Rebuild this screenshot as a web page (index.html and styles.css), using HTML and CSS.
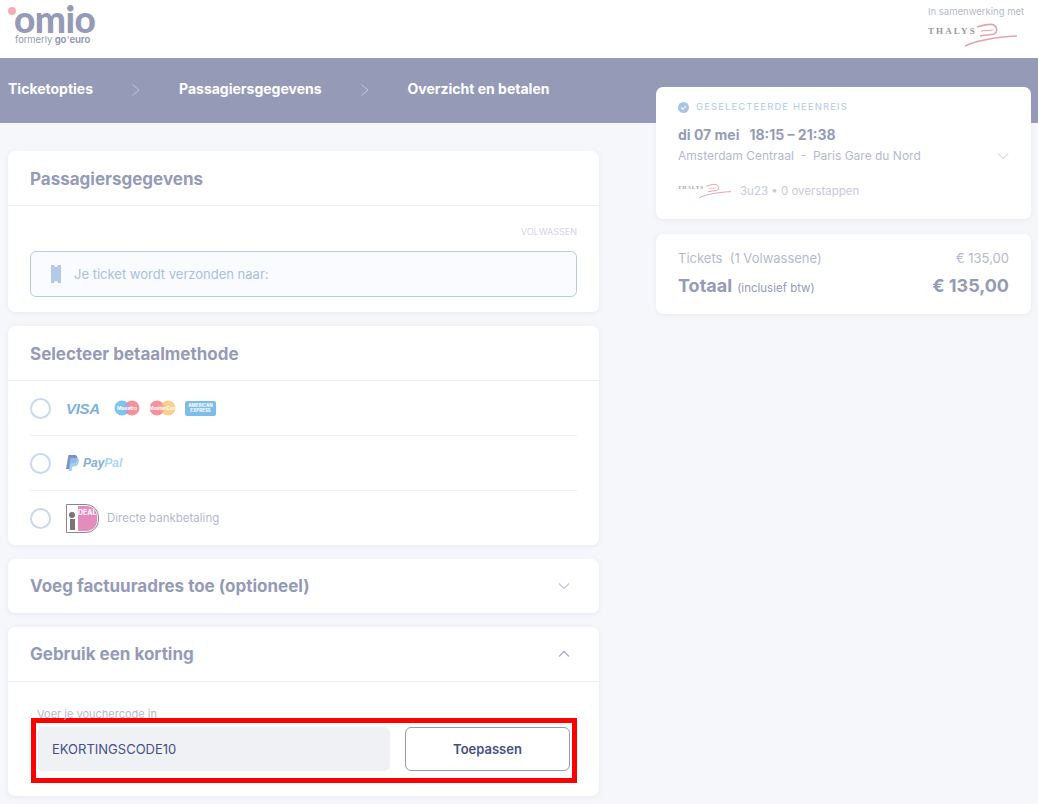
FILE: index.html
```html
<!DOCTYPE html>
<html lang="nl">
<head>
    <meta charset="UTF-8">
    <title>Omio - Overzicht en betalen</title>
    <link rel="stylesheet" href="styles.css">
</head>
<body>
    <svg class="defs" width="0" height="0">
        <symbol id="thalys-mark" viewBox="0 0 54 26">
            <path d="M1 24 C14 18 34 15 53 14" fill="none" stroke="#e3a3b0" stroke-width="1.6"/>
            <path d="M13 5 C20 3 26 1 30 3 C34 6 33 11 30 12 C26 13 20 13 16 14" fill="none" stroke="#e3a3b0" stroke-width="1.6"/>
            <path d="M17 9 L29 8" fill="none" stroke="#e3a3b0" stroke-width="1"/>
        </symbol>
    </svg>

    <header class="topbar">
        <div class="logo">
            <span class="logo-dot"></span>
            <div class="logo-word">omio</div>
            <div class="logo-sub">formerly <b>go<i>'</i>euro</b></div>
        </div>
        <div class="partner">
            <div class="partner-label">In samenwerking met</div>
            <div class="partner-logo">
                <span class="thalys-word">THALYS</span>
                <svg class="thalys-mark"><use href="#thalys-mark"/></svg>
            </div>
        </div>
    </header>

    <nav class="steps">
        <span>Ticketopties</span>
        <svg class="step-arrow" viewBox="0 0 10 14"><path d="M1.5 1.5 L8 7 L1.5 12.5" fill="none" stroke="#c3c7d9" stroke-width="1"/></svg>
        <span>Passagiersgegevens</span>
        <svg class="step-arrow" viewBox="0 0 10 14"><path d="M1.5 1.5 L8 7 L1.5 12.5" fill="none" stroke="#c3c7d9" stroke-width="1"/></svg>
        <span>Overzicht en betalen</span>
    </nav>

    <main class="layout">
        <section class="left-col">
            <div class="card">
                <h2 class="card-title">Passagiersgegevens</h2>
                <div class="passenger-body">
                    <div class="passenger-type">VOLWASSEN</div>
                    <div class="ticket-note">
                        <svg class="ticket-icon" viewBox="0 0 10 18"><path d="M0 0 H3 A2 2 0 0 0 7 0 H10 V18 H7 A2 2 0 0 0 3 18 H0 Z" fill="#b3c9e8"/></svg>
                        <span>Je ticket wordt verzonden naar:</span>
                    </div>
                </div>
            </div>

            <div class="card">
                <h2 class="card-title">Selecteer betaalmethode</h2>
                <div class="pay-list">
                    <div class="pay-row">
                        <span class="radio"></span>
                        <span class="visa">VISA</span>
                        <span class="cc-logo">
                            <svg width="26" height="16" viewBox="0 0 26 16"><circle cx="8" cy="8" r="7.5" fill="#7fc4ec"/><circle cx="18" cy="8" r="7.5" fill="#f5929c"/><path d="M13 2.2 A7.5 7.5 0 0 1 13 13.8 A7.5 7.5 0 0 1 13 2.2" fill="#a5a8d8"/></svg>
                            <span class="cc-text">Maestro</span>
                        </span>
                        <span class="cc-logo">
                            <svg width="27" height="16" viewBox="0 0 27 16"><circle cx="8" cy="8" r="7.5" fill="#f5929c"/><circle cx="19" cy="8" r="7.5" fill="#fbcf8d"/><path d="M13.5 3 A7.5 7.5 0 0 1 13.5 13 A7.5 7.5 0 0 1 13.5 3" fill="#f8ab8c"/></svg>
                            <span class="cc-text">MasterCard</span>
                        </span>
                        <span class="amex">AMERICAN<br>EXPRESS</span>
                    </div>
                    <div class="pay-row">
                        <span class="radio"></span>
                        <svg class="paypal-icon" width="13" height="16" viewBox="0 0 13 16"><path d="M2.5 0 H8 C11 0 12 2 11.3 4.5 C10.6 7.5 8.5 8.5 6 8.5 H4.5 L3.5 14 H0 Z" fill="#7f8fc9"/><path d="M4.5 3 H10 C13 3 13.4 5 12.7 7.5 C12 10.5 10 11.5 7.5 11.5 H6.5 L5.7 16 H2.5 Z" fill="#8fc6ee" opacity=".8"/></svg>
                        <span class="paypal"><b>Pay</b><i>Pal</i></span>
                    </div>
                    <div class="pay-row">
                        <span class="radio"></span>
                        <span class="ideal">
                            <span class="ideal-left"><span class="ideal-dot"></span><span class="ideal-bar"></span></span>
                            <span class="ideal-pink">DEAL</span>
                        </span>
                        <span class="pay-label">Directe bankbetaling</span>
                    </div>
                </div>
            </div>

            <div class="card">
                <div class="card-head">
                    <h2 class="card-title plain">Voeg factuuradres toe (optioneel)</h2>
                    <svg class="chevron" viewBox="0 0 12 8"><path d="M1 1.5 L6 6.5 L11 1.5" fill="none" stroke="#c3c7d9" stroke-width="1.3"/></svg>
                </div>
            </div>

            <div class="card">
                <div class="card-head bordered">
                    <h2 class="card-title plain">Gebruik een korting</h2>
                    <svg class="chevron" viewBox="0 0 12 8"><path d="M1 6.5 L6 1.5 L11 6.5" fill="none" stroke="#a9aec8" stroke-width="1.3"/></svg>
                </div>
                <div class="voucher-body">
                    <div class="voucher-label">Voer je vouchercode in</div>
                    <div class="voucher-row">
                        <div class="voucher-input">EKORTINGSCODE10</div>
                        <button class="voucher-btn">Toepassen</button>
                    </div>
                </div>
            </div>
        </section>

        <aside class="right-col">
            <div class="card side-card trip">
                <div class="trip-head">
                    <svg class="check" viewBox="0 0 12 12"><circle cx="6" cy="6" r="6" fill="#a9c4e8"/><path d="M3.5 6.2 L5.3 8 L8.6 4.4" fill="none" stroke="#fff" stroke-width="1.1"/></svg>
                    <span>GESELECTEERDE HEENREIS</span>
                </div>
                <div class="trip-time">di 07 mei&nbsp;&nbsp; 18:15 – 21:38</div>
                <div class="trip-route">
                    <span>Amsterdam Centraal &nbsp;-&nbsp; Paris Gare du Nord</span>
                    <svg class="chevron" viewBox="0 0 12 8"><path d="M1 1.5 L6 6.5 L11 1.5" fill="none" stroke="#c3c7d9" stroke-width="1"/></svg>
                </div>
                <div class="trip-train">
                    <span class="thalys-small">THALYS</span>
                    <svg class="thalys-mark-small"><use href="#thalys-mark"/></svg>
                    <span>3u23 • 0 overstappen</span>
                </div>
            </div>

            <div class="card side-card totals">
                <div class="total-row">
                    <span>Tickets &nbsp;(1 Volwassene)</span>
                    <span>€ 135,00</span>
                </div>
                <div class="total-row grand">
                    <span><b>Totaal</b> <small>(inclusief btw)</small></span>
                    <b>€ 135,00</b>
                </div>
            </div>
        </aside>
    </main>
</body>
</html>
```

FILE: styles.css
```css
body {
    margin: 0;
    height: 804px;
    overflow: hidden;
    background: #f6f7fb;
    font-family: "Inter", "Noto Sans", sans-serif;
    color: #959bb7;
}

.defs {
    display: block;
    height: 0;
}

/* top white bar */
.topbar {
    height: 58px;
    background: #fff;
    display: flex;
    justify-content: space-between;
}

.logo {
    position: relative;
    padding: 1px 0 0 14px;
}

.logo-dot {
    position: absolute;
    left: 8px;
    top: 7px;
    width: 8px;
    height: 8px;
    border-radius: 50%;
    background: #f8adb5;
}

.logo-word {
    font-family: "Lato", sans-serif;
    font-weight: 900;
    font-size: 37px;
    line-height: 36px;
    letter-spacing: -0.6px;
    color: #959bb7;
}

.logo-sub {
    font-size: 9.5px;
    line-height: 12px;
    margin-top: -3px;
    margin-left: 1px;
    letter-spacing: -0.1px;
}

.logo-sub i {
    color: #f8adb5;
}

.partner {
    width: 110px;
    padding-top: 6px;
}

.partner-label {
    font-size: 9.5px;
    line-height: 12px;
    color: #b5b9cf;
}

.partner-logo {
    display: flex;
    align-items: flex-start;
    margin-top: 4px;
}

.thalys-word {
    font-family: "Liberation Serif", serif;
    font-weight: 700;
    font-size: 9px;
    letter-spacing: 2.1px;
    line-height: 12px;
    margin-top: 3px;
    color: #9a9a9e;
}

.thalys-mark {
    width: 54px;
    height: 26px;
    margin-left: -13px;
}

/* progress band */
.steps {
    height: 65px;
    box-sizing: border-box;
    background: #959bb7;
    color: #fff;
    display: flex;
    align-items: flex-start;
    gap: 38px;
    padding: 22px 0 0 8px;
    font-size: 14px;
    line-height: 18px;
    font-weight: 700;
}

.step-arrow {
    width: 10px;
    height: 14px;
    margin-top: 3px;
}

/* page columns */
.layout {
    display: grid;
    grid-template-columns: 591px 375px;
    gap: 57px;
    padding: 28px 0 0 8px;
}

.left-col {
    display: flex;
    flex-direction: column;
    gap: 14px;
}

.right-col {
    margin-top: -64px;
    display: flex;
    flex-direction: column;
    gap: 15px;
}

.card {
    background: #fff;
    border-radius: 7px;
    box-shadow: 0 1px 5px rgba(149, 155, 183, 0.14);
}

.card-title {
    margin: 0;
    height: 55px;
    box-sizing: border-box;
    padding: 17px 22px 0;
    font-size: 17px;
    line-height: 22px;
    font-weight: 700;
    color: #959bb7;
    border-bottom: 1px solid #eceef4;
}

.card-title.plain {
    height: auto;
    padding: 0;
    border: 0;
}

.card-head {
    height: 54px;
    box-sizing: border-box;
    padding: 0 29px 0 22px;
    display: flex;
    align-items: center;
    justify-content: space-between;
}

.card-head.bordered {
    height: 55px;
    border-bottom: 1px solid #eceef4;
}

.chevron {
    width: 12px;
    height: 8px;
}

/* passenger card */
.passenger-body {
    padding: 20px 22px 15px;
}

.passenger-type {
    text-align: right;
    font-size: 9px;
    line-height: 12px;
    color: #d3d6e2;
    margin-bottom: 13px;
}

.ticket-note {
    height: 46px;
    box-sizing: border-box;
    background: #f9fbff;
    border: 1px solid #b4cbe8;
    border-radius: 6px;
    display: flex;
    align-items: center;
    gap: 13px;
    padding-left: 20px;
    font-size: 13px;
    color: #a9c0e0;
}

.ticket-icon {
    width: 10px;
    height: 18px;
}

/* payment methods */
.pay-list {
    padding: 0 22px;
}

.pay-row {
    height: 55px;
    box-sizing: border-box;
    display: flex;
    align-items: center;
    border-bottom: 1px solid #eff0f5;
}

.pay-row:last-child {
    height: 54px;
    border-bottom: 0;
}

.radio {
    width: 21px;
    height: 21px;
    box-sizing: border-box;
    border: 2px solid #c9d8ee;
    border-radius: 50%;
    margin-right: 15px;
}

.visa {
    width: 39px;
    margin-right: 9px;
    font-family: "Liberation Sans", sans-serif;
    font-weight: 700;
    font-style: italic;
    font-size: 15px;
    letter-spacing: -0.3px;
    color: #7fb0dc;
}

.cc-logo {
    position: relative;
    display: flex;
    margin-right: 9px;
}

.cc-text {
    position: absolute;
    left: 0;
    right: 0;
    top: 5px;
    text-align: center;
    font-size: 5px;
    line-height: 6px;
    font-weight: 700;
    color: #fff;
    white-space: nowrap;
}

.amex {
    width: 31px;
    height: 15px;
    background: #7fbde8;
    border-radius: 2px;
    color: #fff;
    font-size: 4.5px;
    line-height: 5.5px;
    font-weight: 700;
    text-align: center;
    padding-top: 2px;
    box-sizing: border-box;
    white-space: nowrap;
}

.paypal-icon {
    margin-right: 4px;
}

.paypal {
    font-family: "Liberation Sans", sans-serif;
    font-style: italic;
    font-weight: 700;
    font-size: 12px;
    color: #7fb0dc;
}

.paypal b {
    font-weight: 700;
}

.paypal i {
    color: #a9d7f5;
}

.ideal {
    width: 33px;
    height: 29px;
    box-sizing: border-box;
    border: 1.5px solid #8f8488;
    border-radius: 0 13px 13px 0;
    background: #fff;
    display: flex;
    margin-right: 8px;
    overflow: hidden;
}

.ideal-left {
    width: 10px;
    display: flex;
    flex-direction: column;
    align-items: center;
    justify-content: flex-end;
    gap: 1px;
    padding-bottom: 2px;
}

.ideal-dot {
    width: 6px;
    height: 6px;
    border-radius: 50%;
    background: #7d7276;
}

.ideal-bar {
    width: 5px;
    height: 11px;
    background: #7d7276;
}

.ideal-pink {
    flex: 1;
    background: #e58cbf;
    border-radius: 0 10px 10px 0;
    color: #fff;
    font-size: 7px;
    font-weight: 700;
    line-height: 14px;
    margin: 1px;
    overflow: hidden;
}

.pay-label {
    font-size: 11.5px;
    color: #b5b9cf;
}

/* voucher */
.voucher-body {
    position: relative;
    padding: 25px 22px 13px;
}

.voucher-label {
    font-size: 11px;
    line-height: 14px;
    color: #b5b9cf;
    padding-left: 7px;
    margin-bottom: -3px;
}

.voucher-row {
    display: flex;
    justify-content: space-between;
    height: 65px;
    box-sizing: border-box;
    border: 5px solid #fe0000;
    padding: 4px 2px 7px 1px;
    margin-left: 1px;
}

.voucher-input {
    width: 353px;
    background: #f0f1f5;
    border-radius: 6px;
    font-size: 13px;
    line-height: 44px;
    padding-left: 15px;
    box-sizing: border-box;
    color: #454f85;
}

.voucher-btn {
    width: 165px;
    background: #fff;
    border: 1px solid #959bb7;
    border-radius: 6px;
    font-family: inherit;
    font-size: 13px;
    font-weight: 600;
    color: #454f85;
}

/* right column */
.side-card {
    padding: 0 22px;
}

.trip {
    height: 132px;
}

.trip-head {
    display: flex;
    align-items: center;
    gap: 7px;
    padding-top: 14px;
    font-size: 9.5px;
    line-height: 12px;
    letter-spacing: 1.1px;
    color: #b3c9e8;
}

.check {
    width: 11px;
    height: 11px;
}

.trip-time {
    margin-top: 13px;
    font-size: 14px;
    line-height: 18px;
    font-weight: 700;
    color: #959bb7;
}

.trip-route {
    display: flex;
    justify-content: space-between;
    align-items: center;
    margin-top: 4px;
    font-size: 12px;
    line-height: 16px;
    color: #b5b9cf;
}

.trip-train {
    display: flex;
    align-items: center;
    margin-top: 16px;
    font-size: 11.5px;
    line-height: 16px;
    color: #c7cadb;
}

.thalys-small {
    font-family: "Liberation Serif", serif;
    font-weight: 700;
    font-size: 5px;
    letter-spacing: 1px;
    color: #9a9a9e;
    width: 26px;
    margin-bottom: 6px;
}

.thalys-mark-small {
    width: 34px;
    height: 16px;
    margin: 0 8px 0 -6px;
}

.totals {
    height: 80px;
    padding-top: 15px;
    box-sizing: border-box;
}

.total-row {
    display: flex;
    justify-content: space-between;
    font-size: 13px;
    line-height: 18px;
    color: #b5b9cf;
}

.total-row.grand {
    margin-top: 9px;
    font-size: 18px;
    line-height: 20px;
    color: #959bb7;
}

.total-row small {
    font-size: 11.5px;
}
```
